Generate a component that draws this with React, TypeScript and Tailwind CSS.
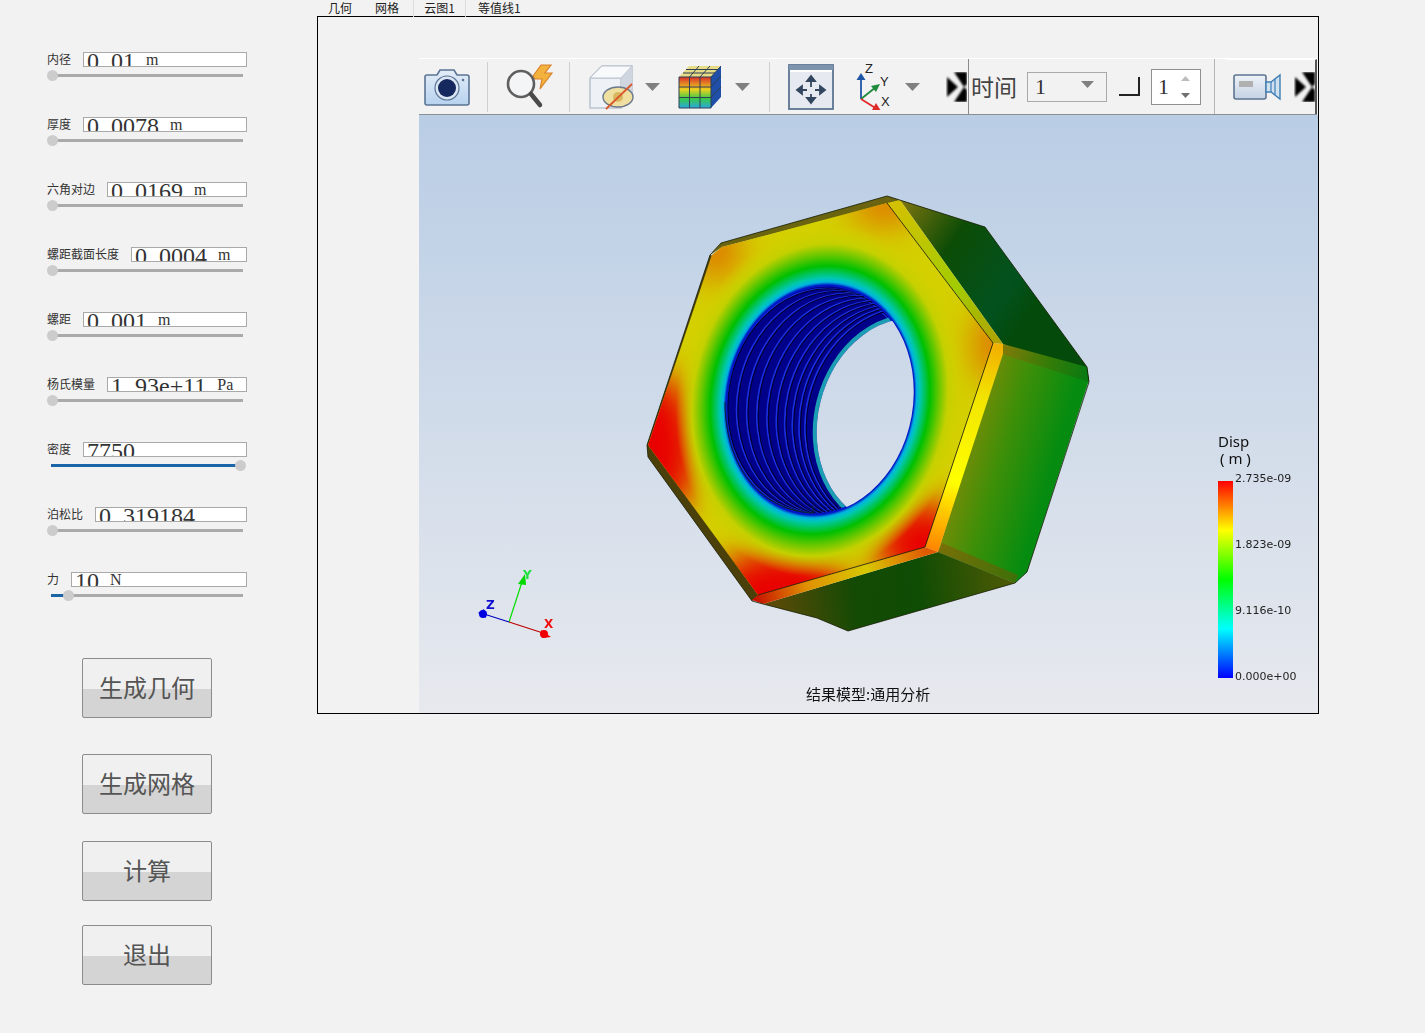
const cjk = "font-['Noto_Sans_CJK_SC',sans-serif]";

const params = [
  { label: "内径", value: "0.01", unit: "m" },
  { label: "厚度", value: "0.0078", unit: "m" },
  { label: "六角对边", value: "0.0169", unit: "m" },
  { label: "螺距截面长度", value: "0.0004", unit: "m" },
  { label: "螺距", value: "0.001", unit: "m" },
  { label: "杨氏模量", value: "1.93e+11", unit: "Pa" },
  { label: "密度", value: "7750", unit: "", pos: 188 },
  { label: "泊松比", value: "0.319184", unit: "" },
  { label: "力", value: "10", unit: "N", pos: 16 },
];

function ParamRow({ label, value, unit, pos = 0 }: { label: string; value: string; unit: string; pos?: number }) {
  const [head, tail] = value.split(".");
  return (
    <div className="h-[65px]">
      <div className="flex items-center">
        <span className={`${cjk} relative -top-px mr-3 text-[12px] leading-[15px] text-[#333]`}>{label}</span>
        <div className="h-[15px] flex-1 overflow-hidden whitespace-pre border border-[#a9a9a9] bg-white pl-[3px] pt-[1px] font-['Liberation_Serif',serif] text-[24px] leading-[15px] text-[#333]">
          {head}
          {tail !== undefined && <span className="mr-[6px]">.</span>}
          {tail}
          {unit && <span className="relative -top-[4px] ml-[11px] text-[16px]">{unit}</span>}
        </div>
      </div>
      <div className="relative mt-[7px] ml-[4px] h-[3px] w-[192px] bg-[#aaaaaa]">
        {pos > 0 && <div className="absolute left-0 top-0 h-full bg-[#1a64a8]" style={{ width: pos }} />}
        <div
          className="absolute top-[-4px] h-[11px] w-[11px] rounded-full bg-[#cccccc]"
          style={{ left: pos - 4 }}
        />
      </div>
    </div>
  );
}

function BigButton({ text, className }: { text: string; className: string }) {
  return (
    <button
      className={`${cjk} ${className} ml-[82px] block h-[60px] w-[130px] rounded-[2px] border border-[#8c8c8c] bg-[linear-gradient(#f0f0f0_0,#f0f0f0_52%,#d4d4d4_52%,#d4d4d4_100%)] pb-[3px] text-center text-[24px] font-normal leading-none text-[#555]`}
    >
      {text}
    </button>
  );
}

function Chevron() {
  return (
    <svg width="21" height="30" viewBox="0 0 21 30" className="shrink-0">
      <defs>
        <filter id="chev" x="-20%" y="-20%" width="140%" height="140%">
          <feGaussianBlur stdDeviation="1.2" />
        </filter>
      </defs>
      <g filter="url(#chev)" fill="#000">
        <path d="M1 5 L12 15 L1 25 Z" />
        <path d="M8 0 H21 V12 L18 15 Z" />
        <path d="M18 15 L21 18 V30 H8 Z" />
      </g>
    </svg>
  );
}

function DropArrow({ className }: { className: string }) {
  return (
    <svg width="15" height="8" viewBox="0 0 15 8" className={`shrink-0 ${className}`}>
      <path d="M0 0 H15 L7.5 8 Z" fill="#808080" />
    </svg>
  );
}

function Sep({ className }: { className: string }) {
  return <div className={`h-[50px] w-[1px] shrink-0 bg-[#cfcfcf] ${className}`} />;
}

function CameraIcon() {
  return (
    <svg width="46" height="38" viewBox="0 0 46 38" className="ml-[5px] shrink-0">
      <defs>
        <linearGradient id="camBody" x1="0" y1="0" x2="0" y2="1">
          <stop offset="0" stopColor="#e4edf7" />
          <stop offset="1" stopColor="#b7d2ef" />
        </linearGradient>
      </defs>
      <path
        d="M3 7 H13 L16 2 H30 L33 7 H43 Q45 7 45 9 V35 Q45 37 43 37 H3 Q1 37 1 35 V9 Q1 7 3 7 Z"
        fill="url(#camBody)"
        stroke="#5b7494"
        strokeWidth="1.6"
      />
      <circle cx="23" cy="20" r="12" fill="#dbe7f4" stroke="#5b7494" strokeWidth="1.2" />
      <circle cx="23" cy="20" r="9" fill="#16295f" />
      <circle cx="39" cy="12" r="1.3" fill="#5b7494" />
    </svg>
  );
}

function BoltIcon() {
  return (
    <svg width="48" height="46" viewBox="0 0 48 46" className="ml-[17px] shrink-0">
      <path d="M28 12 L36 1 H46 L40 9 H47 L35 25 L37 15 H30 Z" fill="#f3b23e" stroke="#d9822b" strokeWidth="1.2" />
      <circle cx="16" cy="20" r="13" fill="#f4f6f8" fillOpacity="0.6" stroke="#5f5f5f" strokeWidth="2.6" />
      <path d="M26 30 L35 41" stroke="#4a4a4a" strokeWidth="4.5" strokeLinecap="round" />
    </svg>
  );
}

function HideCubeIcon() {
  return (
    <svg width="46" height="46" viewBox="0 0 46 46" className="ml-[18px] shrink-0">
      <path d="M2 14 L14 2 H44 V32 L33 44 H2 Z" fill="#eef1f5" stroke="#bcc5d1" strokeWidth="1.6" />
      <path d="M2 14 H33 V44" fill="none" stroke="#bcc5d1" strokeWidth="1.6" />
      <path d="M33 14 L44 2 V32 L33 44 Z" fill="#cfd6df" />
      <path d="M2 14 L14 2 H44 L33 14 Z" fill="#f8f9fb" stroke="#bcc5d1" strokeWidth="1" />
      <ellipse cx="30" cy="33" rx="15" ry="10" fill="#efdfa0" stroke="#6b7a8c" strokeWidth="1.4" />
      <ellipse cx="30" cy="33" rx="5" ry="5" fill="#d8b860" />
      <path d="M18 45 L44 20" stroke="#d9572b" strokeWidth="1.8" />
    </svg>
  );
}

function HeatCubeIcon() {
  return (
    <svg width="44" height="44" viewBox="0 0 44 44" className="ml-[18px] shrink-0">
      <defs>
        <linearGradient id="heatFront" x1="0" y1="0" x2="0" y2="1">
          <stop offset="0" stopColor="#d9302a" />
          <stop offset="0.4" stopColor="#ecd21f" />
          <stop offset="0.7" stopColor="#38c94a" />
          <stop offset="1" stopColor="#2ba7e0" />
        </linearGradient>
      </defs>
      <path d="M1 12 L11 1 H43 L33 12 Z" fill="#e6dc86" />
      <rect x="1" y="12" width="32" height="31" fill="url(#heatFront)" />
      <path d="M33 12 L43 1 V32 L33 43 Z" fill="#1f4fa8" />
      <path
        d="M1 12 H33 V43 H1 Z M11.5 12 V43 M22 12 V43 M1 22 H33 M1 32.5 H33 M11.5 12 L21 1 M22 12 L32 1 M5 8 H37 M8 4.5 H40 M33 22 L43 11 M33 32.5 L43 22 M33 12 L43 1"
        fill="none"
        stroke="#2f3f55"
        strokeWidth="1"
      />
    </svg>
  );
}

function MoveIcon() {
  return (
    <svg width="46" height="46" viewBox="0 0 46 46" className="ml-[18px] shrink-0">
      <rect x="1" y="1" width="44" height="44" fill="#e6eaf0" stroke="#5d7491" strokeWidth="1.8" />
      <rect x="1" y="1" width="44" height="5" fill="#7d93ae" />
      <rect x="2" y="6" width="42" height="2" fill="#ffffff" />
      <g stroke="#33465f" strokeWidth="1.8" fill="#33465f">
        <path d="M23 15 V23 M23 30 V37 M12 26 H19 M27 26 H34" fill="none" />
        <path d="M23 12 L19 17 H27 Z" />
        <path d="M23 39 L19 34 H27 Z" />
        <path d="M9 26 L14 22 V30 Z" />
        <path d="M37 26 L32 22 V30 Z" />
      </g>
    </svg>
  );
}

function AxesIcon() {
  return (
    <svg width="40" height="46" viewBox="0 0 40 46" className="ml-[21px] shrink-0 font-['Liberation_Sans',sans-serif]">
      <path d="M6 35 V14" stroke="#1f55a5" strokeWidth="1.8" />
      <path d="M6 9 L1.5 16 H10.5 Z" fill="#1f55a5" />
      <path d="M6 35 L21 23" stroke="#1f8a3c" strokeWidth="1.8" />
      <path d="M25 20 L16 22 L21 28 Z" fill="#1f8a3c" />
      <path d="M6 35 L22 45" stroke="#e02a2a" strokeWidth="1.8" />
      <path d="M26 47 L17 46 L21 39 Z" fill="#e02a2a" />
      <text x="10" y="9" fontSize="13" fill="#222">Z</text>
      <text x="25" y="22" fontSize="13" fill="#222">Y</text>
      <text x="26" y="42" fontSize="13" fill="#222">X</text>
    </svg>
  );
}

function VideoIcon() {
  return (
    <svg width="48" height="28" viewBox="0 0 48 28" className="ml-[6px] shrink-0">
      <defs>
        <linearGradient id="vidBody" x1="0" y1="0" x2="0" y2="1">
          <stop offset="0" stopColor="#eef2f7" />
          <stop offset="1" stopColor="#c3d2e4" />
        </linearGradient>
      </defs>
      <rect x="1" y="2" width="32" height="24" rx="2" fill="url(#vidBody)" stroke="#5d7491" strokeWidth="1.6" />
      <rect x="6" y="8" width="14" height="6" fill="#b0b0b0" />
      <path d="M33 9 H38 L47 2 V26 L38 19 H33 Z" fill="#cfe0ef" stroke="#3f7fb5" strokeWidth="1.4" />
      <path d="M38 9 V19 M42 6 V22" stroke="#3f7fb5" strokeWidth="1.2" />
    </svg>
  );
}

function Toolbar() {
  return (
    <div className="flex h-[57px] w-[898px] items-center border-t border-b border-t-white border-b-[#8a8f96] bg-[#f2f2f2]">
      <CameraIcon />
      <Sep className="ml-[17px]" />
      <BoltIcon />
      <Sep className="ml-[16px]" />
      <HideCubeIcon />
      <DropArrow className="ml-[11px]" />
      <HeatCubeIcon />
      <DropArrow className="ml-[13px]" />
      <Sep className="ml-[19px]" />
      <MoveIcon />
      <AxesIcon />
      <DropArrow className="ml-[10px]" />
      <div className="ml-[26px] mr-[1px]">
        <Chevron />
      </div>
      <div className="h-full w-[1px] shrink-0 bg-[#8a8a8a]" />
      <span className={`${cjk} ml-[2px] w-[48px] shrink-0 text-[23px] leading-none text-[#444]`}>时间</span>
      <div className="ml-[8px] flex h-[30px] w-[80px] shrink-0 items-center justify-between border border-[#a9a9a9] pl-[7px] pr-[12px] font-['Liberation_Serif',serif] text-[22px] text-[#333]">
        1
        <svg width="13" height="7" viewBox="0 0 13 7" className="mb-[5px]">
          <path d="M0 0 H13 L6.5 7 Z" fill="#808080" />
        </svg>
      </div>
      <div className="ml-[12px] h-[19px] w-[21px] shrink-0 border-r-2 border-b-2 border-[#222]" />
      <div className="ml-[11px] flex h-[36px] w-[50px] shrink-0 items-center justify-between border border-[#8f8f8f] bg-white pl-[6px] pr-[9px] font-['Liberation_Serif',serif] text-[22px] text-[#333]">
        1
        <svg width="11" height="24" viewBox="0 0 11 24">
          <path d="M1 6 H10 L5.5 1 Z" fill="#bdbdbd" />
          <path d="M1 18 H10 L5.5 23 Z" fill="#707070" />
        </svg>
      </div>
      <Sep className="ml-[13px] !h-full !bg-[#b5b5b5]" />
      <div className="ml-[12px] flex h-full flex-1 items-center border-t border-r-2 border-white border-r-[#555]">
        <VideoIcon />
        <div className="ml-[13px]">
          <Chevron />
        </div>
      </div>
    </div>
  );
}

const threads = [0, 0.12, 0.24, 0.36, 0.48, 0.59, 0.69, 0.78, 0.86, 0.93];
const facePath = "M887 203 L993 343 L925 547 L758 595 L648 445 L712 255 L722 247 Z";
const backHole = "translate(903 422) rotate(14)";

function Nut() {
  const center = "translate(820 400) rotate(10)";
  return (
    <svg viewBox="419 115 899 598" className="block h-full w-full">
      <defs>
        <linearGradient id="upperSide" gradientUnits="userSpaceOnUse" x1="900" y1="205" x2="1040" y2="300">
          <stop offset="0" stopColor="#7c7410" />
          <stop offset="0.38" stopColor="#0c4c06" />
          <stop offset="0.8" stopColor="#02521f" />
          <stop offset="1" stopColor="#044a0a" />
        </linearGradient>
        <linearGradient id="rightSide" gradientUnits="userSpaceOnUse" x1="945" y1="460" x2="1045" y2="490">
          <stop offset="0" stopColor="#8c8a08" />
          <stop offset="0.5" stopColor="#3f8f08" />
          <stop offset="1" stopColor="#058c10" />
        </linearGradient>
        <linearGradient id="rightTop" gradientUnits="userSpaceOnUse" x1="1005" y1="350" x2="1085" y2="375">
          <stop offset="0" stopColor="#7d7a08" />
          <stop offset="0.5" stopColor="#3a7c08" />
          <stop offset="1" stopColor="#0a7a10" />
        </linearGradient>
        <linearGradient id="rightLow" gradientUnits="userSpaceOnUse" x1="935" y1="555" x2="1020" y2="580">
          <stop offset="0" stopColor="#7a7008" />
          <stop offset="1" stopColor="#3c7008" />
        </linearGradient>
        <linearGradient id="bottomSide" gradientUnits="userSpaceOnUse" x1="770" y1="610" x2="1010" y2="580">
          <stop offset="0" stopColor="#5e4a08" />
          <stop offset="0.35" stopColor="#144a04" />
          <stop offset="0.62" stopColor="#0f4c04" />
          <stop offset="1" stopColor="#4d5a04" />
        </linearGradient>
        <linearGradient id="chamferRight" gradientUnits="userSpaceOnUse" x1="995" y1="345" x2="930" y2="555">
          <stop offset="0" stopColor="#f2b000" />
          <stop offset="0.25" stopColor="#f2e500" />
          <stop offset="0.65" stopColor="#ffff00" />
          <stop offset="1" stopColor="#ff7a00" />
        </linearGradient>
        <linearGradient id="chamferTop" gradientUnits="userSpaceOnUse" x1="890" y1="200" x2="1000" y2="345">
          <stop offset="0" stopColor="#d6c000" />
          <stop offset="0.6" stopColor="#a2cc00" />
          <stop offset="1" stopColor="#b0a000" />
        </linearGradient>
        <linearGradient id="chamferBottom" gradientUnits="userSpaceOnUse" x1="925" y1="550" x2="755" y2="600">
          <stop offset="0" stopColor="#e05a00" />
          <stop offset="0.35" stopColor="#d8c800" />
          <stop offset="0.7" stopColor="#e09000" />
          <stop offset="1" stopColor="#c81000" />
        </linearGradient>
        <radialGradient id="ring" cx="0" cy="0" r="1.75" gradientUnits="userSpaceOnUse">
          <stop offset="0.571" stopColor="#0010c0" />
          <stop offset="0.59" stopColor="#00b4e0" />
          <stop offset="0.61" stopColor="#00c8b0" />
          <stop offset="0.67" stopColor="#00c000" />
          <stop offset="0.73" stopColor="#70c800" />
          <stop offset="0.78" stopColor="#c4d000" />
          <stop offset="0.88" stopColor="#d4d000" stopOpacity="0" />
        </radialGradient>
        <filter id="soft" x="-80%" y="-80%" width="260%" height="260%">
          <feGaussianBlur stdDeviation="17" />
        </filter>
        <clipPath id="faceClip">
          <path d={facePath} />
        </clipPath>
        <clipPath id="holeClip">
          <ellipse cx="0" cy="0" rx="93" ry="115" transform={center} />
        </clipPath>
        <mask id="through" maskUnits="userSpaceOnUse" x="419" y="115" width="899" height="598">
          <rect x="419" y="115" width="899" height="598" fill="#fff" />
          <g clipPath="url(#holeClip)">
            <ellipse cx="0" cy="0" rx="85" ry="105" transform={backHole} fill="#000" />
          </g>
        </mask>
      </defs>

      <g mask="url(#through)">
        {/* outer side faces */}
        <path d="M900 200 L985 227 L1087 367 L1089 380 L1003 344 Z" fill="url(#upperSide)" />
        <path d="M1003 344 L1089 380 L1027 572 L1015 583 L938 552 Z" fill="url(#rightSide)" />
        <path d="M1003 344 L1087 367 L1089 382 L1002 354 Z" fill="url(#rightTop)" />
        <path d="M938 552 L1015 583 L1018 575 L942 543 Z" fill="url(#rightLow)" />
        <path d="M938 552 L1015 583 L848 631 L817 618 L763 604 Z" fill="url(#bottomSide)" />
        <path d="M887 196 L900 200 L888 204 L722 247 L710 255 L721 243 Z" fill="#6a6410" />
        <path d="M710 255 L647 445 L648 457 L752 601 L760 596 L652 445 L714 256 Z" fill="#4c400a" />

        {/* chamfer strips round the face */}
        <path d="M887 203 L900 200 L1003 344 L993 343 Z" fill="url(#chamferTop)" />
        <path d="M993 343 L1003 344 L1003 354 L938 552 L925 547 Z" fill="url(#chamferRight)" />
        <path d="M925 547 L938 552 L763 604 L752 600 L758 595 Z" fill="url(#chamferBottom)" />

        {/* stress colours on the face */}
        <path d={facePath} fill="#d4d000" />
        <g clipPath="url(#faceClip)">
          <g filter="url(#soft)">
            <ellipse cx="648" cy="448" rx="50" ry="75" fill="#e80000" />
            <ellipse cx="770" cy="600" rx="75" ry="50" fill="#e80000" transform="rotate(-18 770 600)" />
            <ellipse cx="925" cy="545" rx="48" ry="42" fill="#e80000" />
            <ellipse cx="885" cy="205" rx="34" ry="20" fill="#e07000" />
            <ellipse cx="715" cy="250" rx="24" ry="30" fill="#e07000" />
            <ellipse cx="995" cy="345" rx="20" ry="38" fill="#e07000" />
          </g>
          <g transform={`${center} scale(93 115)`}>
            <circle cx="0" cy="0" r="1.75" fill="url(#ring)" />
          </g>
        </g>

        {/* threaded bore */}
        <ellipse cx="0" cy="0" rx="93" ry="115" transform={center} fill="#000088" />
        <g clipPath="url(#holeClip)">
          {threads.map((t) => (
            <g key={t} transform={`translate(${820 + t * 85} ${400 + t * 20}) rotate(${10 + t * 4})`} fill="none">
              <ellipse cx="0" cy="0" rx="93" ry="112" stroke="#1a30e0" strokeWidth="1.6" />
              <ellipse cx="1.5" cy="0" rx="93" ry="112" stroke="#00002c" strokeWidth="1" />
            </g>
          ))}
          <ellipse cx="0" cy="0" rx="87" ry="107" transform={backHole} fill="none" stroke="#1b9db4" strokeWidth="4" />
        </g>
        <ellipse cx="0" cy="0" rx="93" ry="115" transform={center} fill="none" stroke="#0018c8" strokeWidth="2" />

        {/* edge lines */}
        <path d="M725 402 C725 460 755 510 813 513 V506" fill="none" stroke="#0a2a2a" strokeWidth="1" />
        <path d="M887 203 L993 343 L925 547 L758 595" fill="none" stroke="#141400" strokeWidth="0.8" />
        <path d="M887 196 L985 227 L1087 367 L1089 382 L1027 572 L1015 583 L848 631 L817 618 L763 604 L752 601 L648 457 L647 445 L710 255 L721 243 Z" fill="none" stroke="#141a00" strokeWidth="0.8" />
      </g>

      {/* axis triad */}
      <g strokeWidth="1.2">
        <path d="M509 622 L522 582" stroke="#00e000" />
        <path d="M509 622 L484 614" stroke="#0000c0" />
        <path d="M509 622 L543 633" stroke="#c00000" />
      </g>
      <path d="M525 574 L518 584 L526 585 Z" fill="#00d800" />
      <circle cx="483" cy="614" r="4" fill="#0000e0" />
      <path d="M478 613 L484 609 L486 618 Z" fill="#0000e0" />
      <circle cx="544" cy="634" r="4" fill="#f00000" />
      <path d="M551 637 L541 630 L542 638 Z" fill="#f00000" />
      <g className="font-['DejaVu_Sans',sans-serif]" fontSize="12" fontWeight="700">
        <text x="523" y="579" fill="#20e040">Y</text>
        <text x="486" y="609" fill="#1010d0">Z</text>
        <text x="544" y="628" fill="#f01010">X</text>
      </g>
    </svg>
  );
}

function Legend() {
  return (
    <div className="absolute left-[799px] top-[318px] w-[90px] text-[#111]">
      <div className="font-['Noto_Sans',sans-serif] text-[15px] leading-[17px]">Disp</div>
      <div className="pl-[2px] font-['Noto_Sans',sans-serif] text-[15px] leading-[17px]">( m )</div>
      <div className="relative mt-[14px] h-[197px] w-[15px] bg-[linear-gradient(#ff0000_0%,#ff9000_14%,#ffff00_25%,#00ff00_50%,#00ffff_75%,#0000ff_100%)]">
        {[
          { t: "2.735e-09", y: -9 },
          { t: "1.823e-09", y: 57 },
          { t: "9.116e-10", y: 123 },
          { t: "0.000e+00", y: 189 },
        ].map((l) => (
          <span
            key={l.t}
            className="absolute left-[17px] whitespace-nowrap font-['DejaVu_Sans',sans-serif] text-[11px] leading-[14px] text-[#222]"
            style={{ top: l.y }}
          >
            {l.t}
          </span>
        ))}
      </div>
    </div>
  );
}

function Tab({ text, active, className }: { text: string; active?: boolean; className: string }) {
  return (
    <div
      className={`${cjk} ${className} relative h-[17px] shrink-0 text-[12px] leading-[16px] text-[#222] ${
        active ? "z-10 border-x border-[#dcdcdc] text-center" : ""
      }`}
    >
      {text}
    </div>
  );
}

export default function App() {
  return (
    <div className="flex min-h-screen bg-[#f2f2f2]">
      <aside className="w-[317px] shrink-0 pt-[52px]">
        <div className="ml-[47px] w-[200px]">
          {params.map((p) => (
            <ParamRow key={p.label} {...p} />
          ))}
        </div>
        <BigButton text="生成几何" className="mt-[21px]" />
        <BigButton text="生成网格" className="mt-[36px]" />
        <BigButton text="计算" className="mt-[27px]" />
        <BigButton text="退出" className="mt-[24px]" />
      </aside>

      <main className="w-[1002px] shrink-0">
        <div className="flex h-[16px] pl-[11px]">
          <Tab text="几何" className="w-[24px]" />
          <Tab text="网格" className="ml-[23px] w-[25px]" />
          <Tab text="云图1" active className="ml-[13px] w-[53px]" />
          <Tab text="等值线1" className="ml-[12px] w-[44px]" />
        </div>
        <div className="h-[698px] border border-black pl-[101px] pt-[41px]">
          <Toolbar />
          <div className="relative h-[598px] w-[899px] bg-[linear-gradient(#b9cde5,#e7e9ee)]">
            <Nut />
            <Legend />
            <div className={`${cjk} absolute left-[387px] top-[570px] text-[15px] leading-[18px] text-[#111]`}>
              结果模型:通用分析
            </div>
          </div>
        </div>
      </main>
    </div>
  );
}
